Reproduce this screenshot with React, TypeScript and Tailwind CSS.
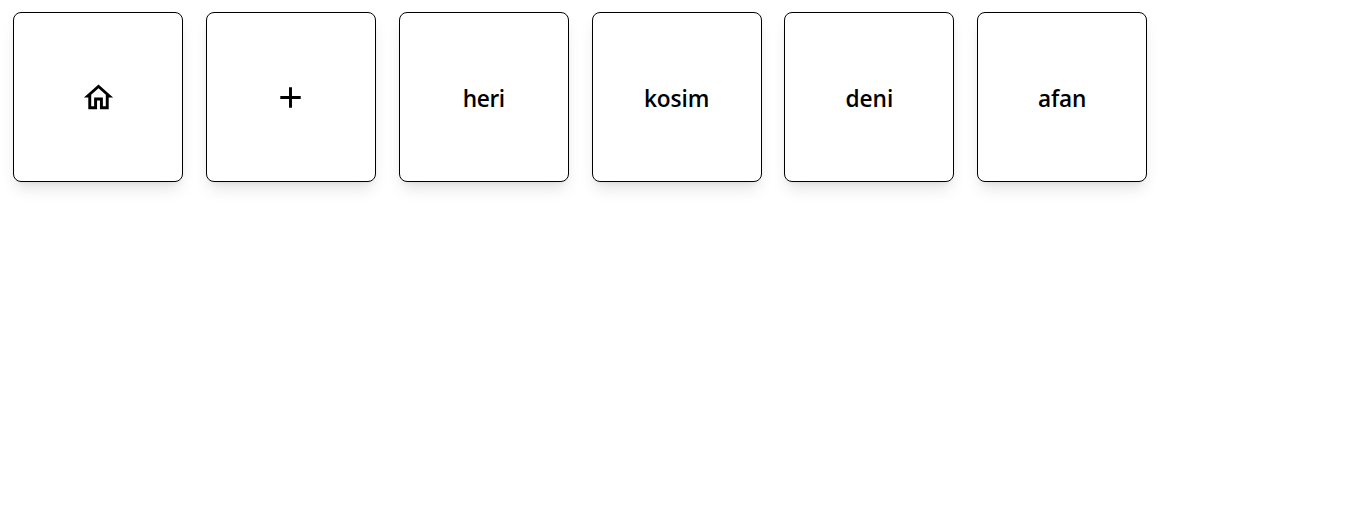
import type { ReactNode } from "react";
import { MdOutlineHome, MdAdd } from "react-icons/md";

function Tile({ children }: { children: ReactNode }) {
  return (
    <button className="flex h-[170px] w-[170px] shrink-0 items-center justify-center rounded-lg border border-black bg-white shadow-lg">
      {children}
    </button>
  );
}

const names = [
  { name: "heri", spacing: "tracking-[-0.4px]" },
  { name: "kosim", spacing: "tracking-[-0.1px]" },
  { name: "deni", spacing: "tracking-normal" },
  { name: "afan", spacing: "tracking-[-0.2px]" },
];

export default function App() {
  return (
    <main className="flex min-h-screen items-start gap-[22.8px] bg-white pl-[13.2px] pt-3 font-['Open_Sans',sans-serif] text-black">
      <Tile>
        <MdOutlineHome size={35} />
      </Tile>
      <Tile>
        <MdAdd size={35} />
      </Tile>
      {names.map(({ name, spacing }) => (
        <Tile key={name}>
          <span className={`pt-[3px] text-[22.7px] leading-8 font-semibold ${spacing}`}>{name}</span>
        </Tile>
      ))}
    </main>
  );
}
